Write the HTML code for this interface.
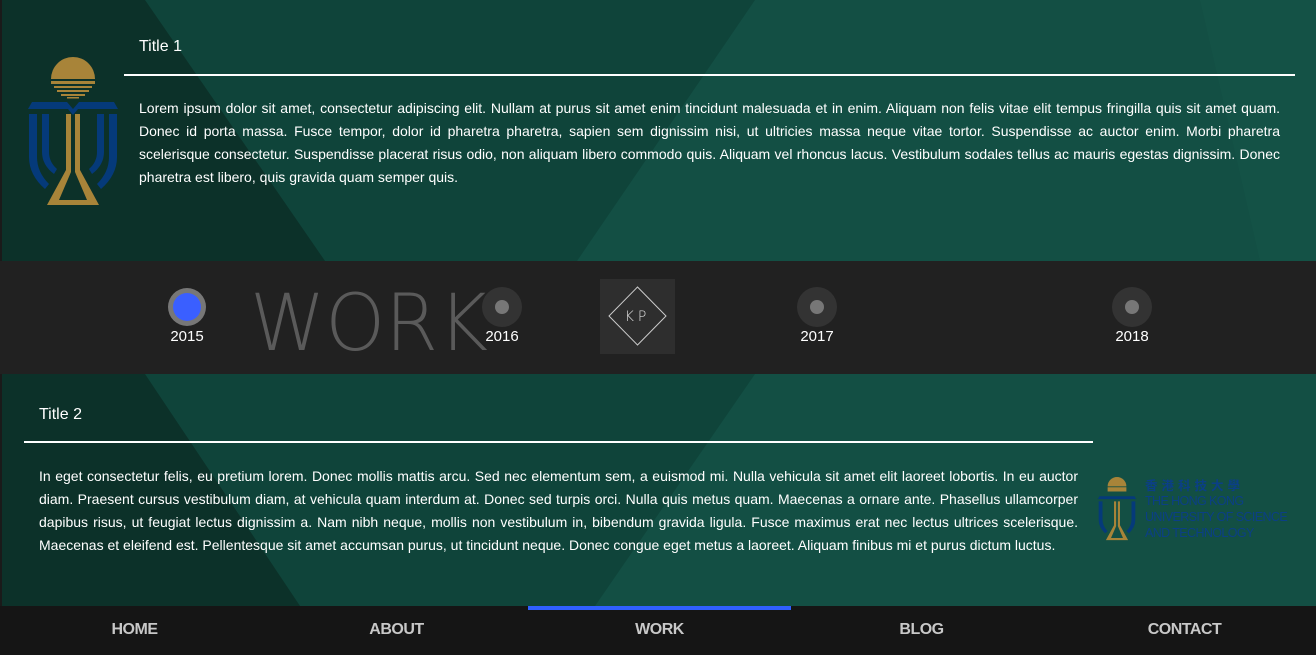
<!DOCTYPE html>
<html><head><meta charset="utf-8"><style>
*{margin:0;padding:0;box-sizing:border-box}
body{width:1316px;height:655px;overflow:hidden;background:#134f44;font-family:"Liberation Sans",sans-serif;position:relative}
.abs{position:absolute}
p.t{color:#fff;font-size:14px;line-height:23px;text-align:justify}
.title{color:#fff;font-size:16px}
.line{height:2px;background:#fff}
.band{top:261px;left:0;width:1316px;height:113px;background:#212121}
.yr{position:absolute;top:328px;width:60px;margin-left:-30px;text-align:center;color:#fff;font-size:15px;font-family:"Liberation Sans",sans-serif}
.dot{position:absolute;top:287px;width:40px;height:40px;margin-left:-20px;border-radius:50%;background:#333}
.dot i{position:absolute;left:13px;top:13px;width:14px;height:14px;border-radius:50%;background:#777}
.nav{top:606px;left:0;width:1316px;height:49px;background:#151515}
.nav div{position:absolute;top:15px;width:263px;text-align:center;color:#c8c8c8;font-weight:bold;font-size:16px;letter-spacing:-0.5px}
</style></head><body>
<svg class="abs" style="left:0;top:0" width="1316" height="606">
<rect width="1316" height="606" fill="#134f44"/>
<polygon points="0,0 755,0 577,261 0,261" fill="#0f443a"/>
<polygon points="0,0 145,0 325,261 0,261" fill="#0c3129"/>
<polygon points="1200,0 1316,0 1316,261 1260,261" fill="#145246"/>
<polygon points="0,374 755,374 595,606 0,606" fill="#0f443a"/>
<polygon points="0,374 145,374 300,606 0,606" fill="#0c3129"/>
</svg>
<svg class="abs" style="left:0;top:0" width="8" height="655"><rect width="2" height="655" fill="#1a1a1a"/></svg>
<svg class="abs" style="left:27px;top:57px" width="92" height="150" viewBox="0 0 92 150">
<path d="M24,22 A22,22 0 0 1 68,22 Z" fill="#a88439"/>
<rect x="24" y="24" width="44" height="3" fill="#a88439"/>
<rect x="27" y="29" width="38" height="2" fill="#a88439"/>
<rect x="30" y="33" width="32" height="2" fill="#a88439"/>
<rect x="34" y="37" width="24" height="2" fill="#a88439"/>
<rect x="40" y="40" width="12" height="1.5" fill="#a88439"/>
<path d="M5,45 L40,45 L46,52 L52,45 L87,45 L91,52 L51,52 L46,58 L41,52 L1,52 Z" fill="#053a7a"/>
<path d="M2,57 H10 V100 Q10,115 22,127 L18,132 Q2,118 2,100 Z M90,57 H82 V100 Q82,115 70,127 L74,132 Q90,118 90,100 Z" fill="#053a7a"/>
<path d="M15,57 H22 V95 Q22,105 30,112 L27,117 Q15,108 15,95 Z M77,57 H70 V95 Q70,105 62,112 L65,117 Q77,108 77,95 Z" fill="#053a7a"/>
<path d="M39,57 H44 V115 L32,143 H60 L48,115 V57 H53 V113 L72,148 H20 L39,113 Z" fill="#a88439"/>
</svg>
<div class="abs title" style="left:139px;top:38px">Title 1</div>
<div class="abs line" style="left:124px;top:74px;width:1171px"></div>
<p class="abs t" style="left:139px;top:97px;width:1141px">Lorem ipsum dolor sit amet, consectetur adipiscing elit. Nullam at purus sit amet enim tincidunt malesuada et in enim. Aliquam non felis vitae elit tempus fringilla quis sit amet quam. Donec id porta massa. Fusce tempor, dolor id pharetra pharetra, sapien sem dignissim nisi, ut ultricies massa neque vitae tortor. Suspendisse ac auctor enim. Morbi pharetra scelerisque consectetur. Suspendisse placerat risus odio, non aliquam libero commodo quis. Aliquam vel rhoncus lacus. Vestibulum sodales tellus ac mauris egestas dignissim. Donec pharetra est libero, quis gravida quam semper quis.</p>
<div class="abs band"></div>
<svg class="abs" style="left:245px;top:280px" width="250" height="80"><text x="5" y="70" font-family="DejaVu Sans" font-weight="200" font-size="78" fill="#5a5a5a" textLength="238" lengthAdjust="spacingAndGlyphs">WORK</text></svg>
<div class="dot" style="left:187px;background:#777;width:38px;height:38px;margin-left:-19px;top:288px"><i style="left:5px;top:5px;width:28px;height:28px;background:#3a5fff"></i></div>
<div class="dot" style="left:502px"><i></i></div>
<div class="dot" style="left:817px"><i></i></div>
<div class="dot" style="left:1132px"><i></i></div>
<div class="yr" style="left:187px">2015</div>
<div class="yr" style="left:502px">2016</div>
<div class="yr" style="left:817px">2017</div>
<div class="yr" style="left:1132px">2018</div>
<div class="abs" style="left:600px;top:279px;width:75px;height:75px;background:#2e2e2e">
<svg width="75" height="75"><polygon points="37.5,8 66,37 37.5,66 9,37" fill="none" stroke="#ccc" stroke-width="1"/><text x="37.5" y="42" text-anchor="middle" fill="#ddd" font-family="DejaVu Sans" font-weight="200" font-size="14" letter-spacing="4">KP</text></svg></div>
<div class="abs title" style="left:39px;top:406px">Title 2</div>
<div class="abs line" style="left:24px;top:441px;width:1069px"></div>
<p class="abs t" style="left:39px;top:465px;width:1039px">In eget consectetur felis, eu pretium lorem. Donec mollis mattis arcu. Sed nec elementum sem, a euismod mi. Nulla vehicula sit amet elit laoreet lobortis. In eu auctor diam. Praesent cursus vestibulum diam, at vehicula quam interdum at. Donec sed turpis orci. Nulla quis metus quam. Maecenas a ornare ante. Phasellus ullamcorper dapibus risus, ut feugiat lectus dignissim a. Nam nibh neque, mollis non vestibulum in, bibendum gravida ligula. Fusce maximus erat nec lectus ultrices scelerisque. Maecenas et eleifend est. Pellentesque sit amet accumsan purus, ut tincidunt neque. Donec congue eget metus a laoreet. Aliquam finibus mi et purus dictum luctus.</p>
<svg class="abs" style="left:1097px;top:477px" width="40" height="64" viewBox="0 0 92 150">
<path d="M24,22 A22,22 0 0 1 68,22 Z" fill="#a88439"/><rect x="24" y="24" width="44" height="10" fill="#a88439"/>
<path d="M5,45 L87,45 L91,52 L1,52 Z" fill="#053a7a"/>
<path d="M3,57 H12 V100 Q12,115 24,127 L18,132 Q3,118 3,100 Z M89,57 H80 V100 Q80,115 68,127 L74,132 Q89,118 89,100 Z" fill="#053a7a"/>
<path d="M39,57 H44 V115 L32,143 H60 L48,115 V57 H53 V113 L72,148 H20 L39,113 Z" fill="#a88439"/>
</svg>
<div class="abs" style="left:1145px;top:477px;color:#0b3f86;font-size:12.5px;line-height:16px;letter-spacing:-0.6px">
<div style="font-family:'Noto Sans CJK TC',sans-serif;letter-spacing:4px;font-weight:bold">香港科技大學</div>
<div>THE HONG KONG</div><div>UNIVERSITY OF SCIENCE</div><div>AND TECHNOLOGY</div></div>
<div class="abs nav">
<div style="left:3px">HOME</div><div style="left:265px">ABOUT</div><div style="left:528px">WORK</div><div style="left:790px">BLOG</div><div style="left:1053px">CONTACT</div>
</div>
<div class="abs" style="left:528px;top:606px;width:263px;height:4px;background:#3060ff"></div>
</body></html>
